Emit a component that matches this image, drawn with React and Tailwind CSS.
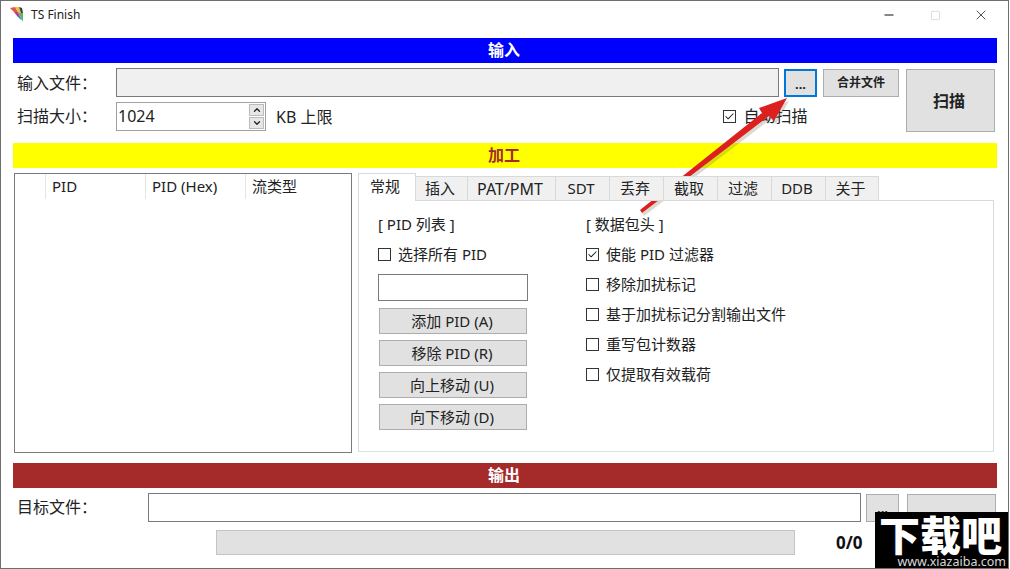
import { Check, X, Minus, Square, ChevronUp, ChevronDown } from 'lucide-react';

const tabs = [
  { name: '插入', w: 'w-[52px]' },
  { name: 'PAT/PMT', w: 'w-[88px] text-[16px]' },
  { name: 'SDT', w: 'w-[54px]' },
  { name: '丢弃', w: 'w-[54px]' },
  { name: '截取', w: 'w-[54px]' },
  { name: '过滤', w: 'w-[54px]' },
  { name: 'DDB', w: 'w-[54px]' },
  { name: '关于', w: 'w-[53px]' },
];

const pidButtons = ['添加 PID (A)', '移除 PID (R)', '向上移动 (U)', '向下移动 (D)'];

const headerOptions = [
  { label: '使能 PID 过滤器', checked: true },
  { label: '移除加扰标记', checked: false },
  { label: '基于加扰标记分割输出文件', checked: false },
  { label: '重写包计数器', checked: false },
  { label: '仅提取有效载荷', checked: false },
];

function CheckBox({ checked }) {
  return (
    <span className="w-[13px] h-[13px] border border-[#333] bg-white flex items-center justify-center shrink-0">
      {checked && <Check className="w-[11px] h-[11px] text-[#222]" strokeWidth={2.2} />}
    </span>
  );
}

function SectionBar({ color, textColor, label }) {
  return (
    <div className={`h-[25px] flex items-center justify-center pr-[2px] pb-[2px] font-bold text-[16px] ${color} ${textColor}`}>
      {label}
    </div>
  );
}

function GrayButton({ className, children }) {
  return (
    <button className={`bg-[#e1e1e1] border border-[#adadad] flex items-center justify-center text-[#222] ${className}`}>
      {children}
    </button>
  );
}

function AppIcon() {
  return (
    <svg width="16" height="16" viewBox="0 0 16 16">
      <polygon points="0,1 5,0 8,5 4,5" fill="#e0584a" />
      <polygon points="4,5 8,5 10,9 7,9" fill="#c2389a" />
      <polygon points="7,9 10,9 12,13 10,12" fill="#3f7fd0" />
      <polygon points="5,0 9,0 11,6 8,5" fill="#e8c83a" />
      <polygon points="9,0 12,1 13,6 11,6" fill="#3c3c3c" />
      <polygon points="8,5 11,6 13,6 13,15 10,9" fill="#5cb85c" />
    </svg>
  );
}

export default function App() {
  return (
    <div className="relative w-[1009px] h-[569px] bg-white overflow-hidden border border-[#6e6e6e] text-[15px] text-[#222] font-['Noto_Sans','Noto_Sans_CJK_SC',sans-serif]">
      {/* Title bar */}
      <div className="h-[37px] flex items-start pt-[6px]">
        <div className="ml-[9px]"><AppIcon /></div>
        <span className="ml-[5px] text-[12px] leading-[16px] text-[#222]">TS Finish</span>
        <div className="ml-auto mr-[4px] flex items-center h-[16px]">
          <div className="w-[46px] flex justify-center"><Minus className="w-[14px] h-[14px] text-[#111]" strokeWidth={2} /></div>
          <div className="w-[46px] flex justify-center"><Square className="w-[11px] h-[11px] text-[#ccc]" strokeWidth={1.5} absoluteStrokeWidth /></div>
          <div className="w-[46px] flex justify-center"><X className="w-[16px] h-[16px] text-[#222]" strokeWidth={1.2} /></div>
        </div>
      </div>

      <div className="ml-[12px] w-[984px]">
        {/* Input section */}
        <SectionBar color="bg-[#0000ff]" textColor="text-white" label="输入" />
        <div className="flex mt-[5px] h-[64px]">
          <div className="w-[103px] pl-[4px] flex flex-col text-[16px]">
            <span className="h-[29px] flex items-center">输入文件：</span>
            <span className="h-[29px] mt-[4px] flex items-center">扫描大小：</span>
          </div>
          <div className="w-[786px]">
            <div className="flex h-[29px]">
              <div className="w-[663px] bg-[#f0f0f0] border border-[#7a7a7a]" />
              <GrayButton className="ml-[5px] mt-[1px] w-[33px] h-[28px] !border-2 !border-[#0078d7] text-[13px] font-bold pt-[3px]">...</GrayButton>
              <GrayButton className="ml-[6px] mt-[1px] w-[76px] h-[28px] text-[12px] font-bold">合并文件</GrayButton>
            </div>
            <div className="flex items-center mt-[5px] h-[29px] text-[16px]">
              <div className="w-[150px] h-[29px] border border-[#a0a0a0] flex items-center pl-[1px] pb-[2px] relative">
                1024
                <div className="absolute right-[1px] top-[1px] w-[15px] flex flex-col gap-[1px]">
                  <div className="h-[12px] bg-[#e6e6e6] border border-[#bbb] flex items-center justify-center"><ChevronUp className="w-[10px] h-[10px] text-[#222]" strokeWidth={3} /></div>
                  <div className="h-[12px] bg-[#e6e6e6] border border-[#bbb] flex items-center justify-center"><ChevronDown className="w-[10px] h-[10px] text-[#222]" strokeWidth={3} /></div>
                </div>
              </div>
              <span className="ml-[10px]">KB 上限</span>
              <div className="ml-[391px]"><CheckBox checked /></div>
              <span className="ml-[7px] pb-[2px]">自动扫描</span>
            </div>
          </div>
          <GrayButton className="ml-[4px] mt-[1px] w-[89px] h-[63px] text-[16px] font-bold pr-[3px]">扫描</GrayButton>
        </div>

        {/* Processing section */}
        <div className="mt-[11px]">
          <SectionBar color="bg-[#ffff00]" textColor="text-[#a52a2a]" label="加工" />
        </div>
        <div className="flex mt-[5px] h-[280px]">
          <div className="ml-[1px] w-[338px] h-[280px] border border-[#7a7a7a]">
            <div className="flex h-[25px] items-center">
              <div className="w-[30px] h-full" />
              <div className="w-[100px] h-full border-l border-[#e5e5e5] pl-[6px] flex items-center">PID</div>
              <div className="w-[100px] h-full border-l border-[#e5e5e5] pl-[6px] flex items-center">PID (Hex)</div>
              <div className="flex-1 h-full border-l border-[#e5e5e5] pl-[6px] flex items-center">流类型</div>
            </div>
          </div>

          <div className="ml-[6px] w-[636px] flex flex-col">
            <div className="flex items-end h-[28px] relative z-10">
              <div className="w-[58px] h-[28px] bg-white border border-[#d9d9d9] border-b-0 flex items-center justify-center pb-[3px] pr-[4px]">常规</div>
              {tabs.map((tab) => (
                <div key={tab.name} className={`${tab.w} h-[25px] bg-[#f0f0f0] border border-[#d9d9d9] border-l-0 flex items-center justify-center pr-[3px]`}>
                  {tab.name}
                </div>
              ))}
            </div>
            <div className="w-[636px] h-[252px] -mt-[1px] border border-[#d9d9d9] border-b-[#d4e6dc] flex">
              <div className="w-[227px] pl-[19px] pt-[13px]">
                <div className="h-[20px] flex items-center">[ PID 列表 ]</div>
                <div className="flex items-center h-[20px] mt-[10px] gap-[7px]">
                  <CheckBox checked={false} />
                  <span>选择所有 PID</span>
                </div>
                <div className="w-[150px] h-[27px] mt-[10px] border border-[#7a7a7a]" />
                <div className="mt-[7px] flex flex-col gap-[6px]">
                  {pidButtons.map((label) => (
                    <GrayButton key={label} className="ml-[1px] w-[148px] h-[26px] pr-[2px]">{label}</GrayButton>
                  ))}
                </div>
              </div>
              <div className="pt-[13px]">
                <div className="h-[20px] flex items-center">[ 数据包头 ]</div>
                <div className="mt-[10px] flex flex-col gap-[10px]">
                  {headerOptions.map((opt) => (
                    <div key={opt.label} className="flex items-center h-[20px] gap-[7px]">
                      <CheckBox checked={opt.checked} />
                      <span>{opt.label}</span>
                    </div>
                  ))}
                </div>
              </div>
            </div>
          </div>
        </div>

        {/* Output section */}
        <div className="mt-[10px]">
          <SectionBar color="bg-[#a52a2a]" textColor="text-white" label="输出" />
        </div>
        <div className="flex mt-[5px] h-[29px]">
          <span className="w-[135px] pl-[4px] pb-[2px] flex items-center text-[16px]">目标文件：</span>
          <div className="w-[713px] h-[29px] border border-[#7a7a7a]" />
          <GrayButton className="ml-[5px] mt-[1px] w-[33px] h-[28px] text-[13px] font-bold pt-[2px]">...</GrayButton>
          <GrayButton className="ml-[8px] mt-[1px] w-[89px] h-[28px]" />
        </div>
        <div className="flex items-center mt-[8px] h-[25px]">
          <div className="ml-[203px] w-[579px] h-[25px] bg-[#e1e1e1] border border-[#c4c4c4]" />
          <span className="ml-[41px] font-bold text-[17px] text-[#111]">0/0</span>
        </div>
      </div>

      {/* Red annotation arrow */}
      <svg className="absolute -left-[1px] -top-[1px] pointer-events-none" width="1010" height="569" viewBox="0 0 1010 569">
        <polygon points="640,210 762,113 759,108 787,98 774,121 769,116 642,213" fill="#6b6b4a" opacity="0.25" transform="translate(2,3)" />
        <polygon points="640,210 762,113 759,108 787,98 774,121 769,116 642,213" fill="#dc1f1f" />
      </svg>

      {/* Watermark */}
      <div className="absolute right-0 -bottom-[1px] w-[133px] h-[57px] bg-black text-white flex flex-col items-end pr-[2px]">
        <div className="w-full h-[43px] text-center text-[41px] leading-[43px] font-black font-['Noto_Sans_CJK_SC',sans-serif]">下载吧</div>
        <div className="text-[12.5px] leading-[13px] text-[#d8d8d8]">www.xiazaiba.com</div>
      </div>
    </div>
  );
}
